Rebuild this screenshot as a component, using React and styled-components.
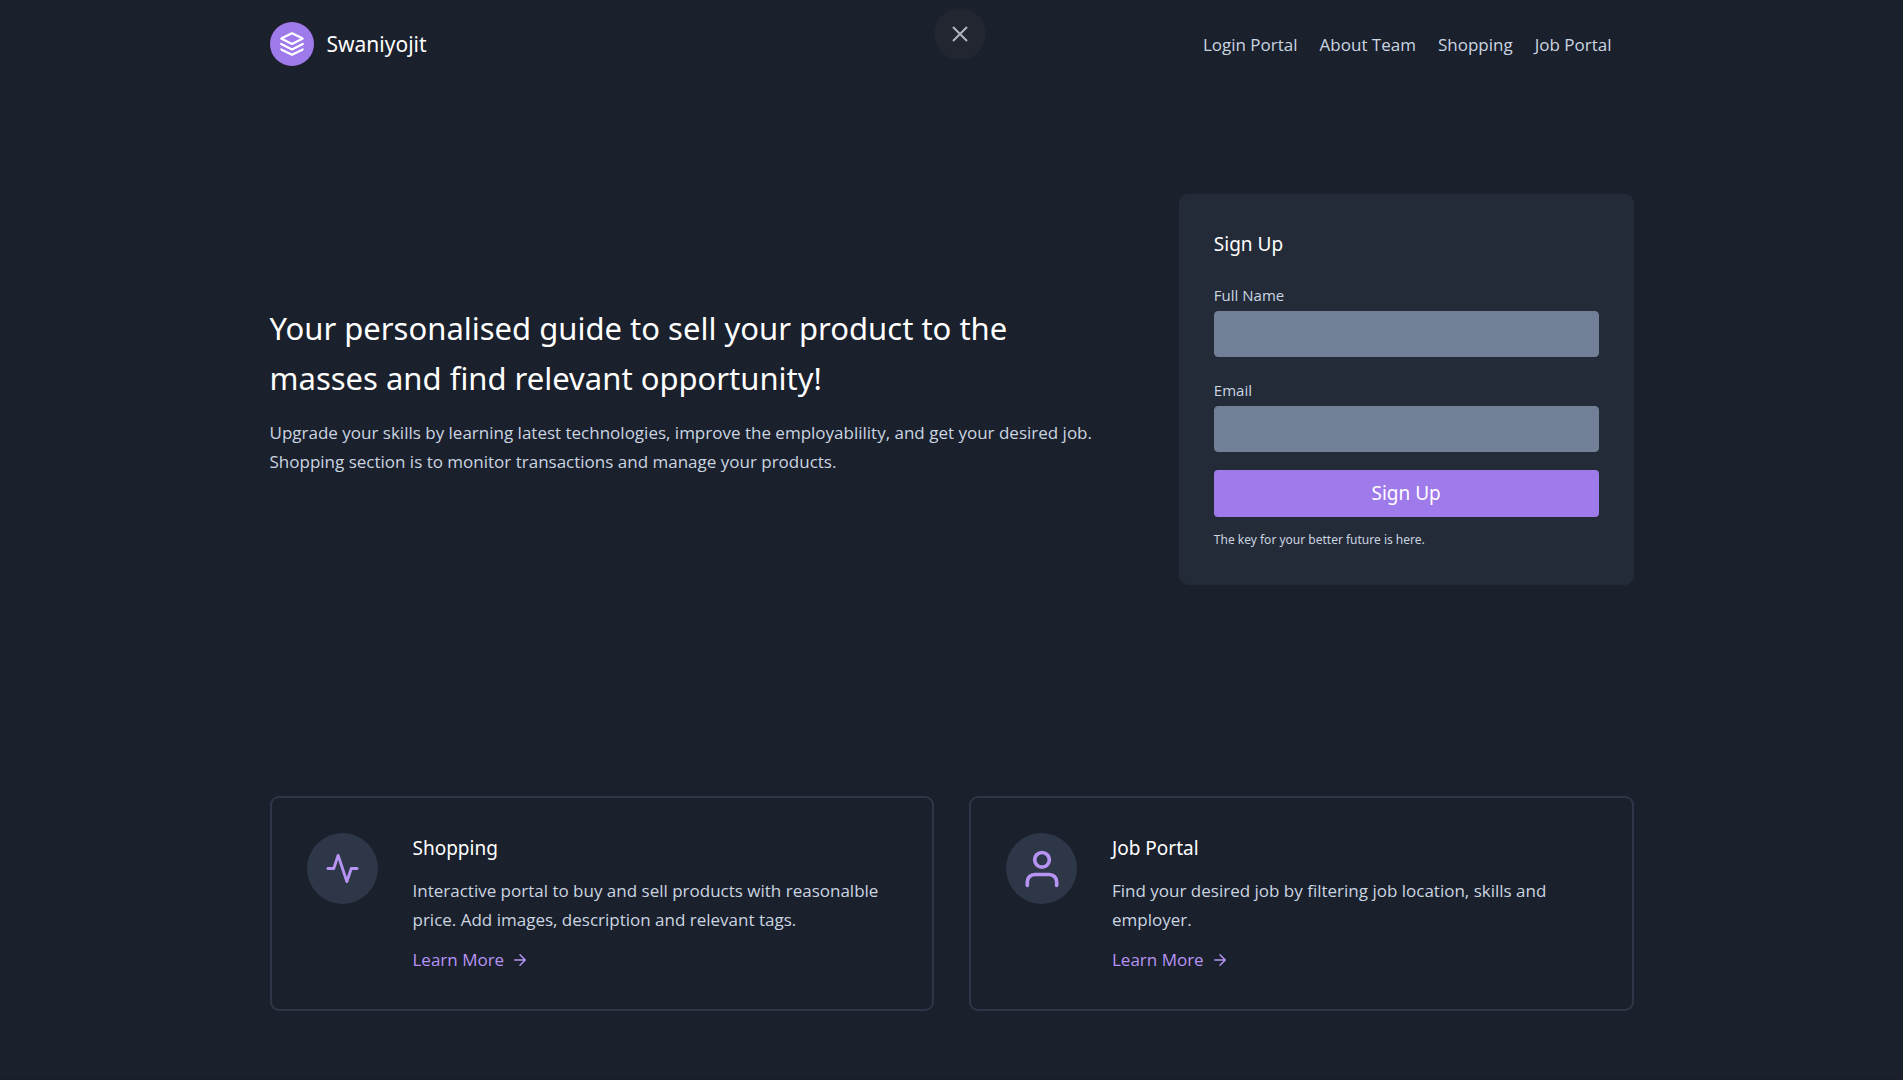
import React from "react";
import styled, { createGlobalStyle } from "styled-components";

const headingFont = `"Noto Sans", "Open Sans", sans-serif`;

const GlobalStyle = createGlobalStyle`
  *, *::before, *::after { box-sizing: border-box; }
  body {
    margin: 0;
    background: #1a202c;
    color: #cbd5e0;
    font-family: "Open Sans", "Noto Sans", sans-serif;
    font-size: 17px;
    line-height: 26px;
  }
  h1, h2, p { margin: 0; font-weight: 400; }
  h1, h2 { font-family: ${headingFont}; }
  a { color: inherit; text-decoration: none; }
`;

const Page = styled.div`
  min-height: 100vh;
  border-bottom: 1px solid #1c1b29;
`;

const Container = styled.div`
  width: 100%;
  max-width: 1408px;
  margin: 0 auto;
  padding: 0 22px;
`;

const Header = styled(Container).attrs({ as: "header" })`
  display: flex;
  align-items: center;
  justify-content: space-between;
  padding: 22px;
`;

const Brand = styled.a`
  display: flex;
  align-items: center;
  gap: 13px;
  color: #fff;
  font-family: ${headingFont};
  font-size: 21px;
  line-height: 32px;
`;

const Logo = styled.svg`
  width: 44px;
  height: 44px;
  padding: 9px;
  border-radius: 50%;
  background: #9f7aea;
  color: #fff;
`;

const Nav = styled.nav`
  display: flex;
  gap: 22px;
  padding: 2px 22px 0 0;
`;

const CloseButton = styled.button`
  position: fixed;
  top: 8px;
  left: 50%;
  display: grid;
  place-items: center;
  width: 52px;
  height: 52px;
  margin-left: -18px;
  padding: 0;
  border: 0;
  border-radius: 50%;
  background: #222630;
  color: #b2b5bb;
  cursor: pointer;
`;

const Hero = styled(Container).attrs({ as: "section" })`
  display: flex;
  align-items: center;
  justify-content: space-between;
  padding-top: 106px;
  padding-bottom: 106px;
`;

const Intro = styled.div`
  width: 62%;
  line-height: 29px;
`;

const Headline = styled.h1`
  max-width: 818px;
  margin-bottom: 15px;
  color: #fff;
  font-size: 31px;
  line-height: 50px;
`;

const SignUpCard = styled.form`
  display: flex;
  flex-direction: column;
  width: 33.3333%;
  padding: 35px;
  border-radius: 9px;
  background: #242b38;
`;

const Title = styled.h2`
  margin-bottom: ${(p) => p.$gap}px;
  color: #fff;
  font-size: 19px;
  line-height: 30px;
`;

const Field = styled.div`
  display: flex;
  flex-direction: column;
  margin-bottom: 18px;
`;

const Label = styled.label`
  font-size: 15px;
  line-height: 31px;
`;

const Input = styled.input`
  width: 100%;
  height: 46px;
  padding: 4px 13px;
  border: 1px solid #718096;
  border-radius: 4px;
  background: #718096;
  color: #fff;
  font: inherit;
  outline: 0;
`;

const Submit = styled.button`
  height: 47px;
  padding: 9px 35px;
  border: 0;
  border-radius: 4px;
  background: #9f7aea;
  color: #fff;
  font-family: ${headingFont};
  font-size: 19px;
  line-height: 29px;
  cursor: pointer;
`;

const Note = styled.p`
  margin-top: 13px;
  font-family: ${headingFont};
  font-size: 12px;
  line-height: 20px;
`;

const Features = styled(Container).attrs({ as: "section" })`
  display: grid;
  grid-template-columns: 1fr 1fr;
  gap: 35px;
  padding-top: 105px;
  padding-bottom: 68px;
`;

const FeatureCard = styled.article`
  display: flex;
  gap: 35px;
  padding: 35px;
  border: 2px solid #2d3748;
  border-radius: 9px;
`;

const FeatureIcon = styled.div`
  display: grid;
  flex: none;
  place-items: center;
  width: 71px;
  height: 71px;
  border-radius: 50%;
  background: #2d3748;
  color: #b794f4;
`;

const FeatureBody = styled.div`
  flex: 1;
  line-height: 29px;
`;

const LearnMore = styled.a`
  display: inline-flex;
  align-items: center;
  gap: 7px;
  margin-top: 13px;
  color: #b794f4;
  line-height: 26px;
`;

const stroke = {
  viewBox: "0 0 24 24",
  fill: "none",
  stroke: "currentColor",
  strokeWidth: 2,
  strokeLinecap: "round",
  strokeLinejoin: "round",
  "aria-hidden": true,
};

const features = [
  {
    title: "Shopping",
    text: "Interactive portal to buy and sell products with reasonalble price. Add images, description and relevant tags.",
    icon: (
      <svg {...stroke} width="35" height="35">
        <path d="M22 12h-4l-3 9L9 3l-3 9H2" />
      </svg>
    ),
  },
  {
    title: "Job Portal",
    text: "Find your desired job by filtering job location, skills and employer.",
    icon: (
      <svg {...stroke} width="44" height="44">
        <path d="M20 21v-2a4 4 0 00-4-4H8a4 4 0 00-4 4v2" />
        <circle cx="12" cy="7" r="4" />
      </svg>
    ),
  },
];

const links = ["Login Portal", "About Team", "Shopping", "Job Portal"];

export default function App() {
  return (
    <Page>
      <GlobalStyle />
      <Header>
        <Brand href="#">
          <Logo {...stroke}>
            <path d="M12 2L2 7l10 5 10-5-10-5zM2 17l10 5 10-5M2 12l10 5 10-5" />
          </Logo>
          <span>Swaniyojit</span>
        </Brand>
        <Nav>
          {links.map((name) => (
            <a href="#" key={name}>{name}</a>
          ))}
        </Nav>
      </Header>
      <CloseButton type="button" aria-label="Close">
        <svg {...stroke} width="16" height="16" viewBox="0 0 16 16" strokeLinecap="butt">
          <path d="M1 1l14 14M15 1L1 15" />
        </svg>
      </CloseButton>
      <main>
        <Hero>
          <Intro>
            <Headline>
              Your personalised guide to sell your product to the masses and find relevant opportunity!
            </Headline>
            <p>
              Upgrade your skills by learning latest technologies, improve the employablility, and get
              your desired job. Shopping section is to monitor transactions and manage your products.
            </p>
          </Intro>
          <SignUpCard onSubmit={(e) => e.preventDefault()}>
            <Title $gap={21}>Sign Up</Title>
            <Field>
              <Label htmlFor="full-name">Full Name</Label>
              <Input id="full-name" type="text" />
            </Field>
            <Field>
              <Label htmlFor="email">Email</Label>
              <Input id="email" type="email" />
            </Field>
            <Submit type="submit">Sign Up</Submit>
            <Note>The key for your better future is here.</Note>
          </SignUpCard>
        </Hero>
        <Features>
          {features.map((f) => (
            <FeatureCard key={f.title}>
              <FeatureIcon>{f.icon}</FeatureIcon>
              <FeatureBody>
                <Title $gap={13}>{f.title}</Title>
                <p>{f.text}</p>
                <LearnMore href="#">
                  Learn More
                  <svg {...stroke} width="18" height="18">
                    <path d="M5 12h14M12 5l7 7-7 7" />
                  </svg>
                </LearnMore>
              </FeatureBody>
            </FeatureCard>
          ))}
        </Features>
      </main>
    </Page>
  );
}
